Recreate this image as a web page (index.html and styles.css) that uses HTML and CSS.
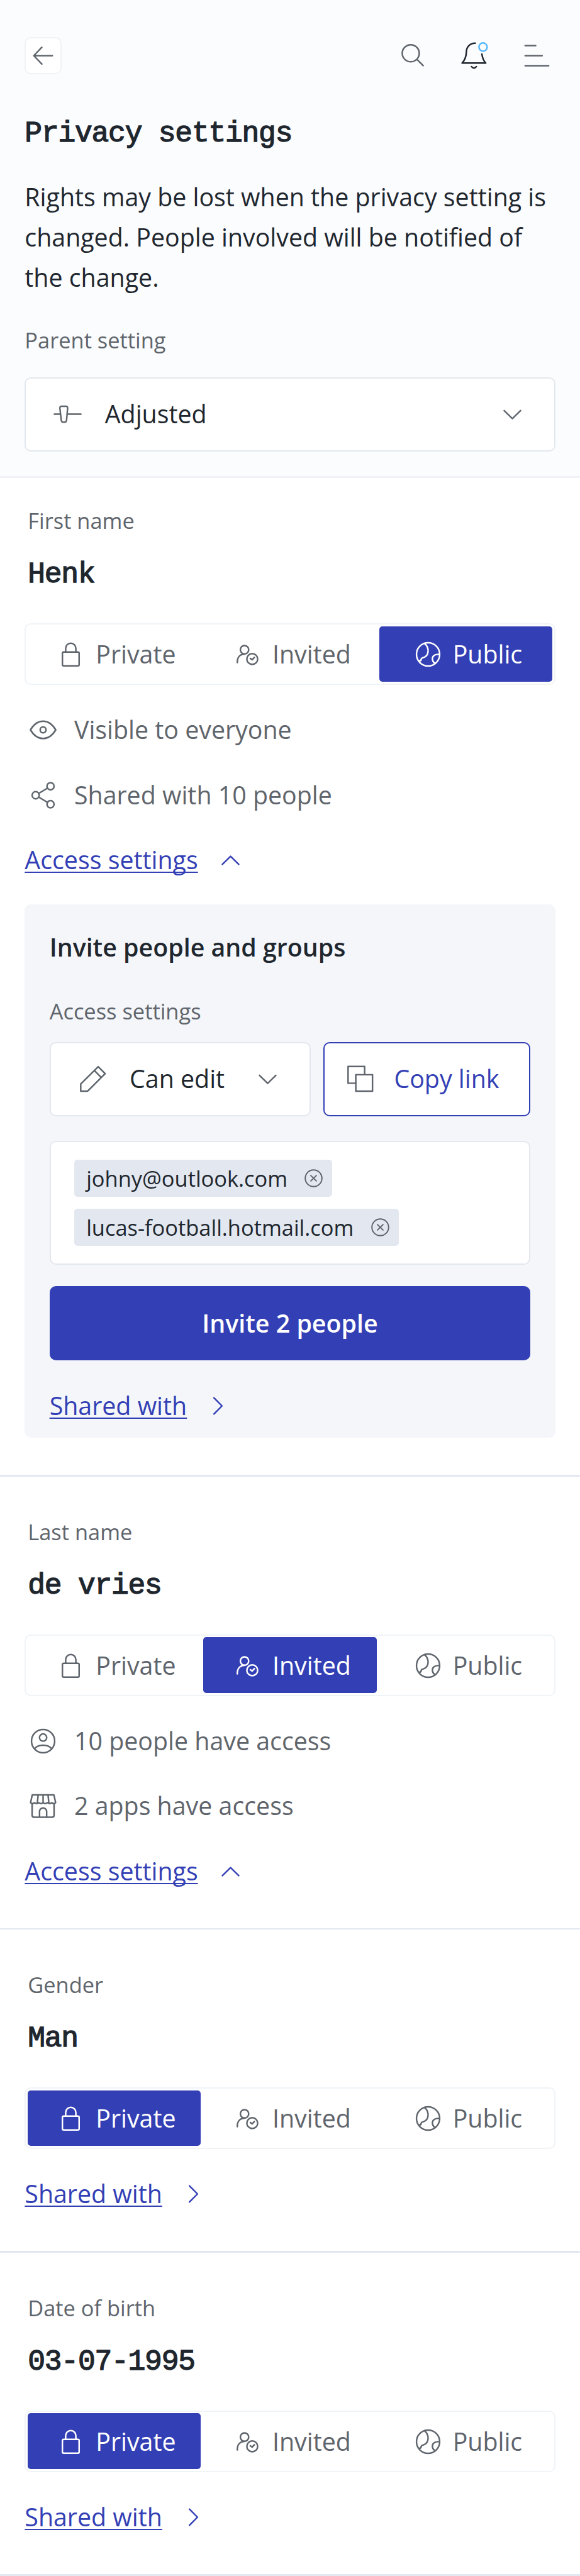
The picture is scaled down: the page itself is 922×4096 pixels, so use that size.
FILE: index.html
```
<!DOCTYPE html>
<html lang="en">
<head>
<meta charset="utf-8">
<title>Privacy settings</title>
<link rel="stylesheet" href="styles.css">
</head>
<body>
<svg class="sprite" aria-hidden="true">
  <symbol id="back" viewBox="0 0 24 24"><path d="M18 12H6M11.2 6.6 6 12l5.2 5.4"/></symbol>
  <symbol id="search" viewBox="0 0 24 24"><circle cx="10.55" cy="10.45" r="5.5"/><path d="m14.6 14.5 4 4"/></symbol>
  <symbol id="bell" viewBox="0 0 24 24"><path d="M12.4 4C9.2 3.8 6.8 6.2 6.7 9.2C6.6 12 6.2 14.4 3.9 16.8H19.2C17.7 15.2 17 13.2 16.7 11M10 19.1Q11.6 20.9 13.1 19.1"/><circle class="dot" cx="17.45" cy="6.45" r="2.65"/></symbol>
  <symbol id="menu" viewBox="0 0 24 24"><path d="M4.4 5.5h6.8M4.4 12h11M4.4 18.5h15.2"/></symbol>
  <symbol id="slider" viewBox="0 0 24 24"><path d="M3.4 12h3.7M12 12h8.6M8.1 6.9h2.8q1.2 0 1.1 1.3L11.3 16q-.2 1.2-1.2 1.2h-1q-1 0-1.2-1.2L7 8.2q-.1-1.3 1.1-1.3z"/></symbol>
  <symbol id="down" viewBox="0 0 24 24"><path d="m6.7 9.7 5.3 5.2 5.3-5.2"/></symbol>
  <symbol id="up" viewBox="0 0 24 24"><path d="m6.7 14.8 5.3-5.2 5.3 5.2"/></symbol>
  <symbol id="right" viewBox="0 0 24 24"><path d="m9.4 6.8 5.2 5.2-5.2 5.2"/></symbol>
  <symbol id="lock" viewBox="0 0 24 24"><rect x="6.6" y="10.5" width="10.8" height="8.9" rx=".8"/><path d="M8.7 10.5V8.1a3.3 3.3 0 0 1 6.6 0v2.4"/></symbol>
  <symbol id="invited" viewBox="0 0 24 24"><circle cx="10.05" cy="9" r="2.7"/><path d="M5.4 17.3c-.1-3 1.3-5.3 4.6-5.5"/><circle cx="15.05" cy="15" r="3.5"/><path d="m13.8 14.6 1.2.9 1.4-1.5"/></symbol>
  <symbol id="globe" viewBox="0 0 24 24"><circle cx="12" cy="12" r="7.5"/><path d="M9.7 4.9c3.5 3 2.8 8-.7 9.2-1 .2-1.3.3-1.4.9-.1.9-.3 1.3-1.3 1.3M19.4 12c-2.5-.3-4.6.7-4.6 2.8 0 1.3.6 2.2 1.5 2.9"/></symbol>
  <symbol id="eye" viewBox="0 0 24 24"><path d="M3.8 12C5.9 8.5 8.8 6.4 12 6.4s6.1 2.1 8.2 5.6c-2.1 3.5-5 5.6-8.2 5.6S5.9 15.5 3.8 12z"/><circle cx="12" cy="12" r="1.9"/></symbol>
  <symbol id="share" viewBox="0 0 24 24"><circle cx="16.8" cy="6.2" r="2.3"/><circle cx="7.2" cy="12" r="2.3"/><circle cx="16.8" cy="17.8" r="2.3"/><path d="m9.2 10.8 5.6-3.4M9.2 13.2l5.6 3.4"/></symbol>
  <symbol id="user" viewBox="0 0 24 24"><circle cx="12" cy="12" r="7.5"/><circle cx="12" cy="9.7" r="2.35"/><path d="M6.5 16.9c2.3-3 8.7-3 11 0"/></symbol>
  <symbol id="store" viewBox="0 0 24 24"><path d="M5 4.9h14l1.1 5q-1.2 1.2-2.5 0-1.4 1.2-2.8 0-1.4 1.2-2.8 0-1.4 1.2-2.8 0-1.4 1.2-2.8 0-1.3 1.2-2.5 0zM8.8 4.9l-.5 5M12 4.9v5M15.2 4.9l.5 5M4.9 10.5v7.500q0 1.300 1.300 1.300h11.600q1.300 0 1.300-1.300v-7.500M9.700 19.300v-3.700a2.300 2.300 0 0 1 4.600 0v3.700"/></symbol>
  <symbol id="pencil" viewBox="0 0 24 24"><path d="M15.500 4.100 20 8.600 8.700 19.900H4.200v-4.600zM13 6.600l4.500 4.500"/></symbol>
  <symbol id="copy" viewBox="0 0 24 24"><path d="M9.200 14.800H4.200V4h10.700v5.200"/><rect x="9.200" y="9.300" width="10.800" height="10.600"/></symbol>
  <symbol id="remove" viewBox="0 0 24 24"><circle cx="12" cy="12" r="5.400"/><path d="m10.200 10.200 3.600 3.600M13.800 10.200l-3.600 3.600"/></symbol>
</svg>

<header class="top">
  <nav class="bar">
    <a class="back"><svg class="icon"><use href="#back"/></svg></a>
    <div class="tools">
      <svg class="icon"><use href="#search"/></svg>
      <svg class="icon bell"><use href="#bell"/></svg>
      <svg class="icon"><use href="#menu"/></svg>
    </div>
  </nav>
  <h1 class="title">Privacy settings</h1>
  <p class="intro">Rights may be lost when the privacy setting is changed. People involved will be notified of the change.</p>
  <div class="label">Parent setting</div>
  <div class="select parent">
    <svg class="icon"><use href="#slider"/></svg>
    <span>Adjusted</span>
    <svg class="icon chevron"><use href="#down"/></svg>
  </div>
</header>
<div class="rule faint"></div>

<section class="field first">
  <div class="label">First name</div>
  <div class="value">Henk</div>
  <div class="segments">
    <div class="segment"><svg class="icon"><use href="#lock"/></svg>Private</div>
    <div class="segment"><svg class="icon"><use href="#invited"/></svg>Invited</div>
    <div class="segment active"><svg class="icon"><use href="#globe"/></svg>Public</div>
  </div>
  <div class="rows">
    <div class="row"><svg class="icon"><use href="#eye"/></svg>Visible to everyone</div>
    <div class="row"><svg class="icon"><use href="#share"/></svg>Shared with 10 people</div>
    <div class="row link wide"><a>Access settings</a><svg class="icon"><use href="#up"/></svg></div>
  </div>
  <div class="panel">
    <h2 class="panel-title">Invite people and groups</h2>
    <div class="label">Access settings</div>
    <div class="controls">
      <div class="select edit">
        <svg class="icon"><use href="#pencil"/></svg>
        <span>Can edit</span>
        <svg class="icon chevron"><use href="#down"/></svg>
      </div>
      <div class="copy"><svg class="icon"><use href="#copy"/></svg>Copy link</div>
    </div>
    <div class="invitees">
      <div class="chip">johny@outlook.com<svg class="icon"><use href="#remove"/></svg></div>
      <div class="chip">lucas-football.hotmail.com<svg class="icon"><use href="#remove"/></svg></div>
    </div>
    <div class="invite">Invite 2 people</div>
    <div class="row link"><a>Shared with</a><svg class="icon"><use href="#right"/></svg></div>
  </div>
</section>
<div class="rule"></div>

<section class="field">
  <div class="label">Last name</div>
  <div class="value">de vries</div>
  <div class="segments">
    <div class="segment"><svg class="icon"><use href="#lock"/></svg>Private</div>
    <div class="segment active"><svg class="icon"><use href="#invited"/></svg>Invited</div>
    <div class="segment"><svg class="icon"><use href="#globe"/></svg>Public</div>
  </div>
  <div class="rows">
    <div class="row"><svg class="icon"><use href="#user"/></svg>10 people have access</div>
    <div class="row"><svg class="icon"><use href="#store"/></svg>2 apps have access</div>
    <div class="row link wide"><a>Access settings</a><svg class="icon"><use href="#up"/></svg></div>
  </div>
</section>
<div class="rule"></div>

<section class="field">
  <div class="label">Gender</div>
  <div class="value">Man</div>
  <div class="segments">
    <div class="segment active"><svg class="icon"><use href="#lock"/></svg>Private</div>
    <div class="segment"><svg class="icon"><use href="#invited"/></svg>Invited</div>
    <div class="segment"><svg class="icon"><use href="#globe"/></svg>Public</div>
  </div>
  <div class="rows">
    <div class="row link"><a>Shared with</a><svg class="icon"><use href="#right"/></svg></div>
  </div>
</section>
<div class="rule"></div>

<section class="field">
  <div class="label">Date of birth</div>
  <div class="value">03-07-1995</div>
  <div class="segments">
    <div class="segment active"><svg class="icon"><use href="#lock"/></svg>Private</div>
    <div class="segment"><svg class="icon"><use href="#invited"/></svg>Invited</div>
    <div class="segment"><svg class="icon"><use href="#globe"/></svg>Public</div>
  </div>
  <div class="rows">
    <div class="row link"><a>Shared with</a><svg class="icon"><use href="#right"/></svg></div>
  </div>
</section>
<div class="rule"></div>
</body>
</html>
```
FILE: styles.css
```
/* 1rem is ten units of the 375-unit mobile layout */
html {
  font-size: 24.5855px;
  background: #fff;
  overflow: hidden;
}

*, *::before, *::after { box-sizing: border-box; }

body {
  margin: 0;
  width: 37.5rem;
  font-family: "Open Sans", "Noto Sans", sans-serif;
  font-size: 1.6rem;
  line-height: 2.4rem;
  color: #20262e;
}

.sprite { display: none; }

.icon {
  flex: none;
  width: 2.4rem;
  height: 2.4rem;
  fill: none;
  stroke: #5f656c;
  stroke-width: 1;
  stroke-linecap: round;
  stroke-linejoin: round;
}

.dot { stroke: #54b7ff; }

.top {
  height: 30.8rem;
  padding: 2.4rem 1.6rem 0;
  background: #fbfcfe;
}

.bar, .tools {
  display: flex;
  justify-content: space-between;
}

.tools { gap: 1.6rem; }
.bell { stroke: #20262e; }

.back {
  display: grid;
  place-content: center;
  width: 2.4rem;
  height: 2.4rem;
  border: .1rem solid #f0f3f6;
  border-radius: .4rem;
  background: #fff;
}

.title, .value {
  margin: 0;
  font-family: "Liberation Mono", monospace;
  font-size: 1.88rem;
  font-weight: 400;
  line-height: 2.4rem;
  letter-spacing: -.048rem;
  -webkit-text-stroke: .055rem currentColor;
}

.title { margin-top: 2.7rem; }

.intro {
  margin: 1.56rem 0 1.64rem;
  line-height: 2.6rem;
}

.label {
  height: 2.1rem;
  padding-top: .04rem;
  font-size: 1.4rem;
  line-height: 2.1rem;
  color: #5f656c;
}

.select {
  display: flex;
  align-items: center;
  gap: 1.2rem;
  height: 4.8rem;
  padding: 0 1.5rem;
  border: .1rem solid #e3e8ee;
  border-radius: .4rem;
  background: #fff;
}

.parent { margin-top: 1.4rem; }
.chevron { margin-left: auto; }

.rule { height: .1rem; background: #e3e8f0; }
.faint { background: #f0f2f5; }

.field { padding: 2.5rem 1.6rem; }
.first { padding: 1.7rem 1.6rem 2.4rem; }
.field > .label, .value { padding-left: .2rem; }
.value { margin: 1.3rem 0 1.9rem; }

.segments {
  display: flex;
  justify-content: space-between;
  align-items: center;
  height: 4rem;
  padding: 0 .1rem;
  border: .1rem solid #f0f4f7;
  border-radius: .4rem;
}

.segment {
  display: flex;
  align-items: center;
  justify-content: center;
  gap: .4rem;
  width: 11.2rem;
  height: 3.6rem;
  padding-top: .05rem;
  border-radius: .2rem;
  color: #5f656c;
}

.active { background: #333fb5; color: #fff; }
.active .icon { stroke: #fff; }

.rows {
  display: grid;
  gap: 1.8rem;
  margin-top: 1.7rem;
}

.row {
  display: flex;
  align-items: center;
  gap: .8rem;
  height: 2.4rem;
  padding-top: .05rem;
  color: #5f656c;
}

.link { color: #333fb5; }
.link .icon { stroke: #333fb5; }
.wide { gap: .9rem; }

.link a {
  text-decoration: underline;
  text-decoration-thickness: .09rem;
  text-underline-offset: .17rem;
  text-decoration-skip-ink: none;
}

.panel {
  height: 34.5rem;
  margin-top: 1.7rem;
  padding: 1.6rem 1.6rem 0;
  border-radius: .4rem;
  background: #f4f6fa;
}

.panel-title {
  margin: 0 0 1.8rem;
  font-size: 1.6rem;
  font-weight: 600;
  line-height: 2.4rem;
}

.controls {
  display: flex;
  gap: .8rem;
  margin-top: 1rem;
}

.edit { width: 16.9rem; }

.copy {
  display: flex;
  flex: 1;
  align-items: center;
  gap: 1rem;
  height: 4.8rem;
  padding-left: 1.1rem;
  border: .1rem solid #333fb5;
  border-radius: .4rem;
  background: #fff;
  color: #333fb5;
}

.invitees {
  display: flex;
  flex-direction: column;
  align-items: flex-start;
  justify-content: center;
  gap: .8rem;
  height: 8rem;
  margin: 1.6rem 0 1.4rem;
  padding-left: 1.5rem;
  border: .1rem solid #e3e8ee;
  border-radius: .4rem;
  background: #fff;
}

.chip {
  display: flex;
  gap: .5rem;
  padding-left: .8rem;
  border-radius: .2rem;
  background: #e3e8f0;
  font-size: 1.4rem;
}

.chip .icon { stroke-width: .8; }

.invite {
  height: 4.8rem;
  margin-bottom: 1.7rem;
  border-radius: .4rem;
  background: #333fb5;
  color: #fff;
  font-weight: 600;
  line-height: 4.8rem;
  text-align: center;
}
```
